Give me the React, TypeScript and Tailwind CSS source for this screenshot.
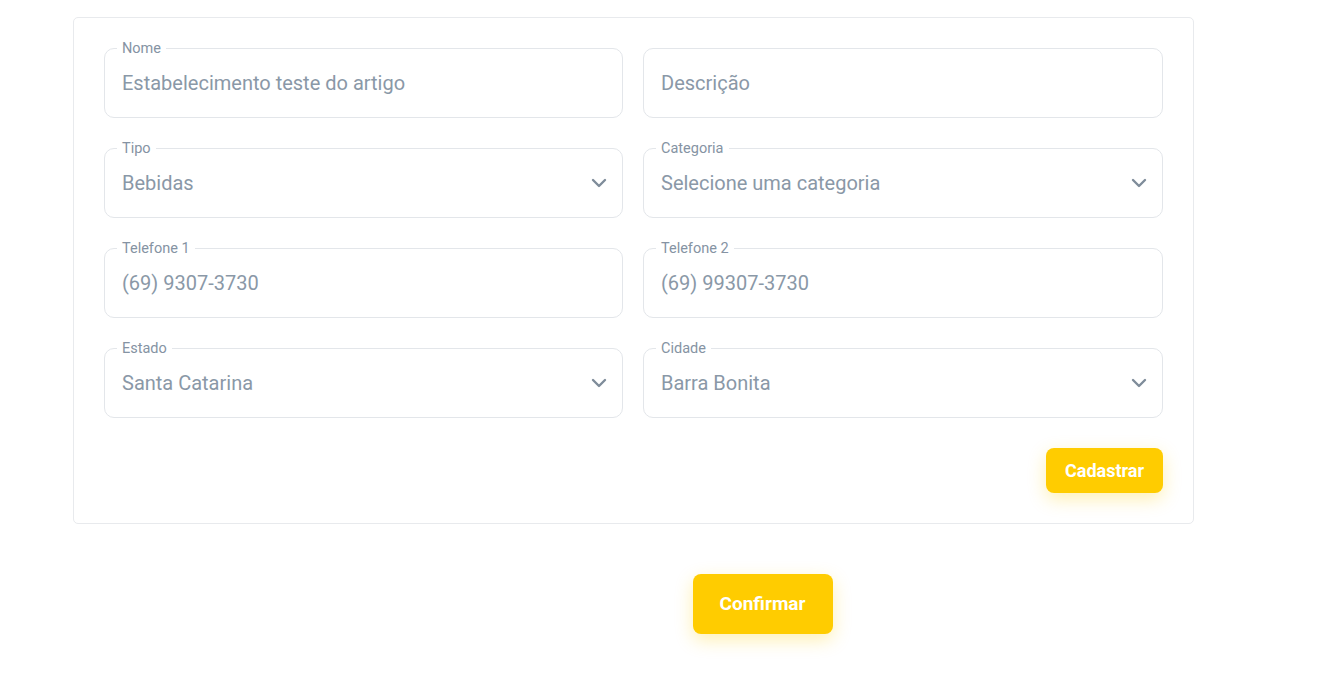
import React from 'react';

type FieldProps = {
  label?: string;
  value: string;
  select?: boolean;
};

const Chevron: React.FC = () => (
  <svg className="w-[16px] h-[10px] text-[#7f8c9a]" fill="none" stroke="currentColor" viewBox="0 0 16 10">
    <path strokeLinecap="round" strokeLinejoin="round" strokeWidth={2.4} d="M2 2l6 6 6-6" />
  </svg>
);

const Field: React.FC<FieldProps> = ({ label, value, select }) => (
  <div className="relative h-[70px] rounded-[10px] border border-[#e3e6ea] flex items-center px-[17px]">
    {label && (
      <span className="absolute -top-[9px] left-[12px] bg-white px-[5px] text-[14.5px] leading-[18px] text-[#8593a3]">
        {label}
      </span>
    )}
    <span className="flex-1 text-[20px] text-[#8a98a7]">{value}</span>
    {select && (
      <span className="-mr-[2px] flex items-center">
        <Chevron />
      </span>
    )}
  </div>
);

const App: React.FC = () => {
  return (
    <div className="min-h-screen bg-white font-['Roboto',sans-serif] pt-[17px]">
      <div className="ml-[73px] w-[1121px] rounded-[5px] border border-[#e8eaed] px-[30px] pt-[30px] pb-[30px]">
        <div className="grid grid-cols-[519px_520px] gap-x-[20px] gap-y-[30px]">
          <Field label="Nome" value="Estabelecimento teste do artigo" />
          <Field value="Descrição" />
          <Field label="Tipo" value="Bebidas" select />
          <Field label="Categoria" value="Selecione uma categoria" select />
          <Field label="Telefone 1" value="(69) 9307-3730" />
          <Field label="Telefone 2" value="(69) 99307-3730" />
          <Field label="Estado" value="Santa Catarina" select />
          <Field label="Cidade" value="Barra Bonita" select />
        </div>
        <div className="flex justify-end mt-[30px]">
          <button className="h-[45px] w-[117px] rounded-[8px] bg-[#ffcc00] text-white font-bold text-[18px] shadow-[0_6px_18px_rgba(255,204,0,0.3)]">
            Cadastrar
          </button>
        </div>
      </div>
      <div className="flex justify-center pl-[188px] mt-[50px]">
        <button className="h-[60px] w-[140px] rounded-[8px] bg-[#ffcc00] text-white font-bold text-[19px] shadow-[0_6px_18px_rgba(255,204,0,0.3)]">
          Confirmar
        </button>
      </div>
    </div>
  );
};

export default App;
